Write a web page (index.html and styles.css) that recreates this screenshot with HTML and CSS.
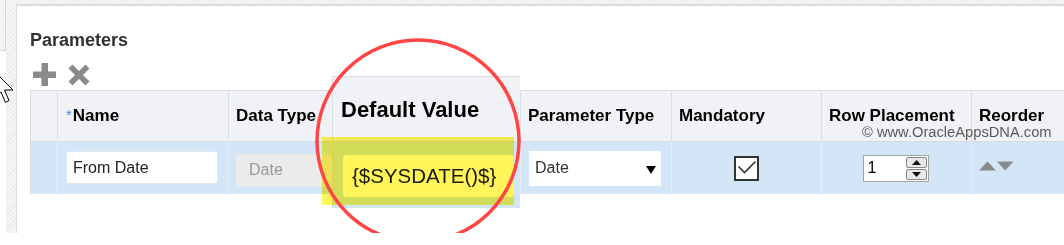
FILE: index.html
```html
<!DOCTYPE html>
<html lang="en">
<head>
    <meta charset="UTF-8">
    <title>Parameters</title>
    <link rel="stylesheet" href="styles.css">
</head>
<body>
<div class="screen">
    <div class="rail"><div class="rail-top"></div></div>
    <div class="gutter"></div>
    <div class="main">
        <div class="main-top"></div>
        <div class="panel">
            <h2 class="title">Parameters</h2>
            <div class="toolbar">
                <svg class="tool-icon" width="23" height="23" viewBox="0 0 23 23"><rect x="8.5" y="0" width="6.5" height="23" fill="#8a8a8a"/><rect x="0" y="8.5" width="23" height="6.5" fill="#8a8a8a"/></svg>
                <svg class="tool-icon x-icon" width="22" height="22" viewBox="0 0 22 22"><path d="M2.5 2.5 L19.5 19.5 M19.5 2.5 L2.5 19.5" stroke="#8a8a8a" stroke-width="5.6"/></svg>
            </div>

            <div class="table-wrap">
                <div class="grid">
                    <div class="th"></div>
                    <div class="th th-name"><span class="req">*</span>Name</div>
                    <div class="th">Data Type</div>
                    <div class="th"></div>
                    <div class="th">Parameter Type</div>
                    <div class="th">Mandatory</div>
                    <div class="th">Row Placement</div>
                    <div class="th">Reorder</div>

                    <div class="td"></div>
                    <div class="td td-name"><span class="field name-field">From Date</span></div>
                    <div class="td"><span class="field disabled">Date</span></div>
                    <div class="td"></div>
                    <div class="td"><span class="select">Date<span class="caret"></span></span></div>
                    <div class="td td-center">
                        <span class="checkbox"><svg width="21" height="21" viewBox="0 0 21 21"><path d="M2.5 8.5 L8.5 14.5 L19.5 3.5" fill="none" stroke="#333" stroke-width="1.6"/></svg></span>
                    </div>
                    <div class="td td-center">
                        <span class="number">1
                            <span class="spin">
                                <span class="spin-btn"><svg width="9" height="5" viewBox="0 0 9 5"><path d="M0 5 L4.5 0 L9 5 Z" fill="#111"/></svg></span>
                                <span class="spin-btn"><svg width="9" height="5" viewBox="0 0 9 5"><path d="M0 0 L9 0 L4.5 5 Z" fill="#111"/></svg></span>
                            </span>
                        </span>
                    </div>
                    <div class="td td-reorder">
                        <svg width="35" height="10" viewBox="0 0 35 10"><path d="M0 9.5 L8.5 0.5 L17 9.5 Z" fill="#8a8a8a"/><path d="M18 0.5 L34.5 0.5 L26.2 9.5 Z" fill="#8a8a8a"/></svg>
                    </div>
                </div>

                <!-- enlarged callout of the Default Value column -->
                <div class="zoom-col">
                    <div class="zoom-head">Default Value</div>
                    <div class="zoom-cell"><span class="zoom-field">{$SYSDATE()$}</span></div>
                </div>
                <div class="highlight"></div>
                <svg class="circle" width="212" height="212" viewBox="0 0 212 212"><circle cx="106" cy="106" r="101" fill="none" stroke="#ff4646" stroke-width="3.5"/></svg>
                <div class="watermark">© www.OracleAppsDNA.com</div>
            </div>
        </div>
    </div>
    <svg class="cursor" width="20" height="45" viewBox="0 0 20 45"><path d="M-5 10 L13 28 L4.5 28 L9 38.5 L5.5 40.5 L1 30 L-5 35 Z" fill="#fff" stroke="#000" stroke-width="1"/></svg>
</div>
</body>
</html>
```

FILE: styles.css
```css
body {
    margin: 0;
    font-family: "Liberation Sans", Arial, sans-serif;
    background-color: #fff;
    overflow: hidden;
}
.screen {
    position: relative;
    display: flex;
    width: 1064px;
    height: 233px;
    overflow: hidden;
}
.rail {
    width: 6px;
    flex: none;
}
.rail-top {
    height: 50px;
    background-color: #f3f3f3;
    border-right: 1px solid #d2d2d2;
    border-bottom: 1px solid #d8d8d8;
}
.gutter {
    width: 10px;
    flex: none;
    background: repeating-linear-gradient(135deg, #f6f6f6 0 2px, #ebebeb 2px 3px);
}
.main {
    flex: 1;
    min-width: 0;
    display: flex;
    flex-direction: column;
}
.main-top {
    height: 4px;
    flex: none;
    background: repeating-linear-gradient(135deg, #f6f6f6 0 2px, #ebebeb 2px 3px);
    border-bottom: 2px solid #d8dce3;
}
.panel {
    flex: 1;
    border-left: 1px solid #d8dce3;
    padding: 23px 0 0 13px;
}
.title {
    margin: 0;
    font-size: 18px;
    line-height: 22px;
    font-weight: bold;
    color: #333;
}
.toolbar {
    display: flex;
    align-items: center;
    gap: 12px;
    margin-top: 12px;
    height: 23px;
    padding-left: 3px;
}
.x-icon {
    margin-top: 1px;
}

.table-wrap {
    position: relative;
    margin-top: 4px;
    width: max-content;
}
.grid {
    display: grid;
    grid-template-columns: 27px 171px 104px 188px 151px 150px 150px 120px;
    grid-template-rows: 51px 52px;
    border-top: 1px solid #d8dde4;
    border-left: 1px solid #d8dde4;
}
.th {
    display: flex;
    align-items: center;
    padding-left: 7px;
    background-color: #f1f2f6;
    border-right: 1px solid #d8dde4;
    border-bottom: 1px solid #d3dae3;
    font-size: 17px;
    font-weight: bold;
    color: #000;
    white-space: nowrap;
}
.th-name {
    padding-left: 8px;
}
.req {
    color: #3b8ee8;
    font-weight: normal;
    font-size: 15px;
    margin-top: -4px;
    margin-right: 1px;
}
.td {
    display: flex;
    align-items: center;
    padding-left: 7px;
    background-color: #d3e6f8;
    border-right: 1px solid #e6eef7;
    font-size: 16px;
    white-space: nowrap;
}
.td-name {
    padding-left: 8px;
}
.td-center {
    justify-content: center;
    padding-left: 0;
}
.td-reorder {
    padding-left: 7px;
    padding-bottom: 4px;
}
.field {
    display: flex;
    align-items: center;
    height: 33px;
    box-sizing: border-box;
    border-radius: 3px;
    font-size: 16px;
}
.name-field {
    width: 152px;
    padding-left: 6px;
    background-color: #fff;
    border: 1px solid #e4e9ef;
    color: #222;
    margin-top: -1px;
}
.disabled {
    width: 130px;
    padding-left: 13px;
    background-color: #ebebeb;
    color: #999;
    margin-top: 4px;
}
.select {
    position: relative;
    display: flex;
    align-items: center;
    width: 132px;
    height: 35px;
    margin-left: 1px;
    padding-left: 6px;
    box-sizing: border-box;
    background-color: #fff;
    color: #333;
}
.caret {
    position: absolute;
    right: 5px;
    top: 15px;
    width: 0;
    height: 0;
    border-left: 5px solid transparent;
    border-right: 5px solid transparent;
    border-top: 8px solid #000;
}
.checkbox {
    display: flex;
    align-items: center;
    justify-content: center;
    width: 25px;
    height: 25px;
    box-sizing: border-box;
    border: 2px solid #333;
    background-color: #fff;
    margin-left: -1px;
}
.number {
    display: flex;
    align-items: center;
    justify-content: space-between;
    width: 66px;
    height: 27px;
    box-sizing: border-box;
    padding: 0 1px 0 4px;
    border: 1px solid #a3a3a3;
    background-color: #fff;
    color: #000;
    margin-left: -2px;
}
.spin {
    display: flex;
    flex-direction: column;
    gap: 1px;
}
.spin-btn {
    display: flex;
    align-items: center;
    justify-content: center;
    width: 19px;
    height: 9px;
    border: 1px solid #888;
    border-radius: 2px;
    background-color: #e8e8e8;
}

.zoom-col {
    position: absolute;
    left: 302px;
    top: -14px;
    width: 188px;
    height: 132px;
    box-sizing: border-box;
    display: grid;
    grid-template-rows: 65px 66px;
    border-top: 1px solid #d8dde4;
    border-left: 1px solid #d8dde4;
    z-index: 1;
}
.zoom-head {
    display: flex;
    align-items: center;
    padding-left: 8px;
    padding-top: 1px;
    background-color: #f1f2f6;
    border-bottom: 1px solid #d3dae3;
    font-size: 22px;
    font-weight: bold;
    color: #000;
    white-space: nowrap;
}
.zoom-cell {
    display: flex;
    align-items: center;
    padding-left: 10px;
    padding-top: 1px;
    background-color: #d3e6f8;
}
.zoom-field {
    display: flex;
    align-items: center;
    width: 171px;
    height: 42px;
    padding-left: 9px;
    box-sizing: border-box;
    border-radius: 3px;
    background-color: #fff;
    font-size: 20.5px;
    color: #1c1c1c;
    white-space: nowrap;
}
.highlight {
    position: absolute;
    left: 292px;
    top: 47px;
    width: 192px;
    height: 68px;
    background-color: #fff45a;
    mix-blend-mode: multiply;
    z-index: 2;
}
.circle {
    position: absolute;
    left: 282px;
    top: -55px;
    z-index: 3;
}
.watermark {
    position: absolute;
    left: 832px;
    top: 34px;
    font-size: 14.7px;
    line-height: 17px;
    color: #5a5a5a;
    white-space: nowrap;
    z-index: 3;
}
.cursor {
    position: absolute;
    left: 0;
    top: 62px;
    z-index: 4;
}
```
